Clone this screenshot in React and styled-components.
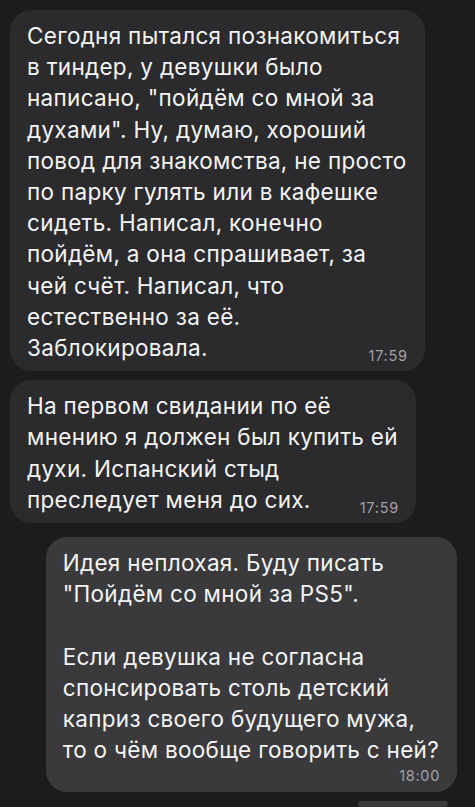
import React from "react";
import styled, { createGlobalStyle } from "styled-components";

// ============================
// Global
// ============================

const GlobalStyle = createGlobalStyle`
  html, body {
    margin: 0;
    padding: 0;
    background: #1c1c1e;
  }
  body {
    font-family: Inter, "Liberation Sans", Arial, sans-serif;
    -webkit-font-smoothing: antialiased;
  }
`;

// ============================
// Styled Components
// ============================

const Chat = styled.div`
  display: flex;
  flex-direction: column;
  padding: 10px 18px 0 10px;
  height: 807px;
  overflow: hidden;
  box-sizing: border-box;
`;

const Bubble = styled.div`
  display: flex;
  flex-direction: column;
  width: fit-content;
  box-sizing: border-box;
  padding: 10px 18px 8px 17px;
  border-radius: 21px;
  background: ${(p) => (p.$out ? "#3a3a3c" : "#2b2b2d")};
  align-self: ${(p) => (p.$out ? "flex-end" : "flex-start")};
  margin-top: ${(p) => p.$gap}px;
`;

const Text = styled.div`
  white-space: pre;
  color: #f4f4f5;
  font-size: 22.5px;
  letter-spacing: 0.3px;
  line-height: 31.2px;
`;

// last line of a message shares its row with the time
const LastRow = styled.div`
  display: flex;
  justify-content: ${(p) => (p.$stacked ? "flex-end" : "space-between")};
  align-items: flex-end;
  gap: 42px;
`;

const Time = styled.span`
  color: #a1a1a6;
  font-size: 14.5px;
  letter-spacing: 0.7px;
  line-height: 16px;
  margin-top: ${(p) => (p.$stacked ? "3px" : "0")};
  margin-bottom: ${(p) => (p.$stacked ? "0" : "-1px")};
  margin-right: -1px;
  flex-shrink: 0;
`;

const PeekBubble = styled.div`
  align-self: flex-end;
  width: 90px;
  height: 40px;
  margin-top: 9px;
  margin-right: 9px;
  border-radius: 20px;
  background: #3a3a3c;
`;

// ============================
// Data
// ============================

const messages = [
  {
    out: false,
    gap: 0,
    time: "17:59",
    text: `Сегодня пытался познакомиться
в тиндер, у девушки было
написано, "пойдём со мной за
духами". Ну, думаю, хороший
повод для знакомства, не просто
по парку гулять или в кафешке
сидеть. Написал, конечно
пойдём, а она спрашивает, за
чей счёт. Написал, что
естественно за её.
Заблокировала.`,
  },
  {
    out: false,
    gap: 9,
    time: "17:59",
    text: `На первом свидании по её
мнению я должен был купить ей
духи. Испанский стыд
преследует меня до сих.`,
  },
  {
    out: true,
    gap: 14,
    time: "18:00",
    stacked: true,
    text: `Идея неплохая. Буду писать
"Пойдём со мной за PS5".

Если девушка не согласна
спонсировать столь детский
каприз своего будущего мужа,
то о чём вообще говорить с ней?`,
  },
];

// ============================
// Component
// ============================

function Message({ out, gap, time, text, stacked }) {
  const lines = text.split("\n");
  const last = lines.pop();

  return (
    <Bubble $out={out} $gap={gap}>
      {stacked ? (
        <>
          <Text>{[...lines, last].join("\n")}</Text>
          <LastRow $stacked>
            <Time $stacked>{time}</Time>
          </LastRow>
        </>
      ) : (
        <>
          <Text>{lines.join("\n")}</Text>
          <LastRow>
            <Text>{last}</Text>
            <Time>{time}</Time>
          </LastRow>
        </>
      )}
    </Bubble>
  );
}

export default function App() {
  return (
    <>
      <GlobalStyle />
      <Chat>
        {messages.map((m, i) => (
          <Message key={i} {...m} />
        ))}
        <PeekBubble />
      </Chat>
    </>
  );
}
